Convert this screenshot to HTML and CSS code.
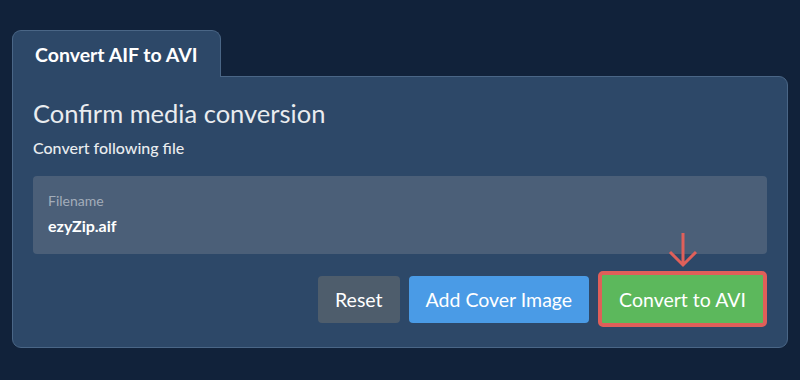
FILE: index.html
```html
<!DOCTYPE html>
<html lang="en">
<head>
    <meta charset="UTF-8">
    <meta name="viewport" content="width=device-width, initial-scale=1.0">
    <title>Convert AIF to AVI</title>
    <link rel="stylesheet" href="styles.css">
</head>
<body>

    <section class="converter">
        <div class="tab">Convert AIF to AVI</div>

        <div class="panel">
            <h2>Confirm media conversion</h2>
            <p class="subtitle">Convert following file</p>

            <div class="file-box">
                <span class="file-label">Filename</span>
                <span class="file-name">ezyZip.aif</span>
            </div>

            <div class="actions">
                <button class="btn btn-reset">Reset</button>
                <button class="btn btn-cover">Add Cover Image</button>
                <div class="convert-wrap">
                    <!-- pointer arrow above the main button -->
                    <svg class="pointer" width="30" height="36" viewBox="0 0 30 36">
                        <path d="M15 1 V33 M2 20 L15 33 L28 20" fill="none" stroke="#e0605a" stroke-width="3"/>
                    </svg>
                    <button class="btn btn-convert">Convert to AVI</button>
                </div>
            </div>
        </div>
    </section>

</body>
</html>
```

FILE: styles.css
```css
/* Basic Styles */
body {
    margin: 0;
    padding: 30px 12px 0;
    background-color: #11223a;
    font-family: Lato, "Open Sans", sans-serif;
    color: #e9ecef;
}

.converter {
    display: flex;
    flex-direction: column;
    align-items: flex-start;
}

.tab {
    box-sizing: border-box;
    height: 47px;
    padding: 0 22px;
    display: flex;
    align-items: center;
    font-size: 19.5px;
    font-weight: bold;
    color: #fff;
    background-color: #2d4868;
    border: 1px solid #4a6686;
    border-bottom: none;
    border-radius: 9px 9px 0 0;
    margin-bottom: -1px;
    position: relative;
    z-index: 1;
}

.panel {
    box-sizing: border-box;
    width: 100%;
    background-color: #2d4868;
    border: 1px solid #4a6686;
    border-radius: 0 9px 9px 9px;
    padding: 20px 20px 20px;
}

.panel h2 {
    margin: 0;
    font-size: 25.5px;
    font-weight: normal;
    line-height: 32px;
    color: #e9ecef;
}

.subtitle {
    margin: 9px 0 0;
    font-size: 16px;
    font-weight: 500;
    line-height: 20px;
}

.file-box {
    margin-top: 18px;
    height: 78px;
    box-sizing: border-box;
    padding: 16px 15px 0;
    background-color: #4b5f78;
    border-radius: 4px;
    display: flex;
    flex-direction: column;
}

.file-label {
    font-size: 14px;
    line-height: 17px;
    color: #a3adba;
}

.file-name {
    margin-top: 6px;
    font-size: 16px;
    font-weight: bold;
    line-height: 22px;
    color: #fff;
}

.actions {
    margin-top: 17px;
    display: flex;
    justify-content: flex-end;
    align-items: center;
    gap: 9px;
}

.btn {
    font-family: inherit;
    font-size: 19.5px;
    color: #fff;
    height: 47px;
    padding: 0 17px;
    border: none;
    border-radius: 4px;
    cursor: pointer;
}

.btn-reset {
    background-color: #4e5d6c;
}

.btn-cover {
    background-color: #4a9be6;
}

.convert-wrap {
    position: relative;
}

.btn-convert {
    height: 56px;
    background-color: #5cb85c;
    border: 4px solid #df5f59;
    border-radius: 5px;
    display: block;
}

.pointer {
    position: absolute;
    left: 50%;
    top: -39px;
    margin-left: -15px;
}
```
